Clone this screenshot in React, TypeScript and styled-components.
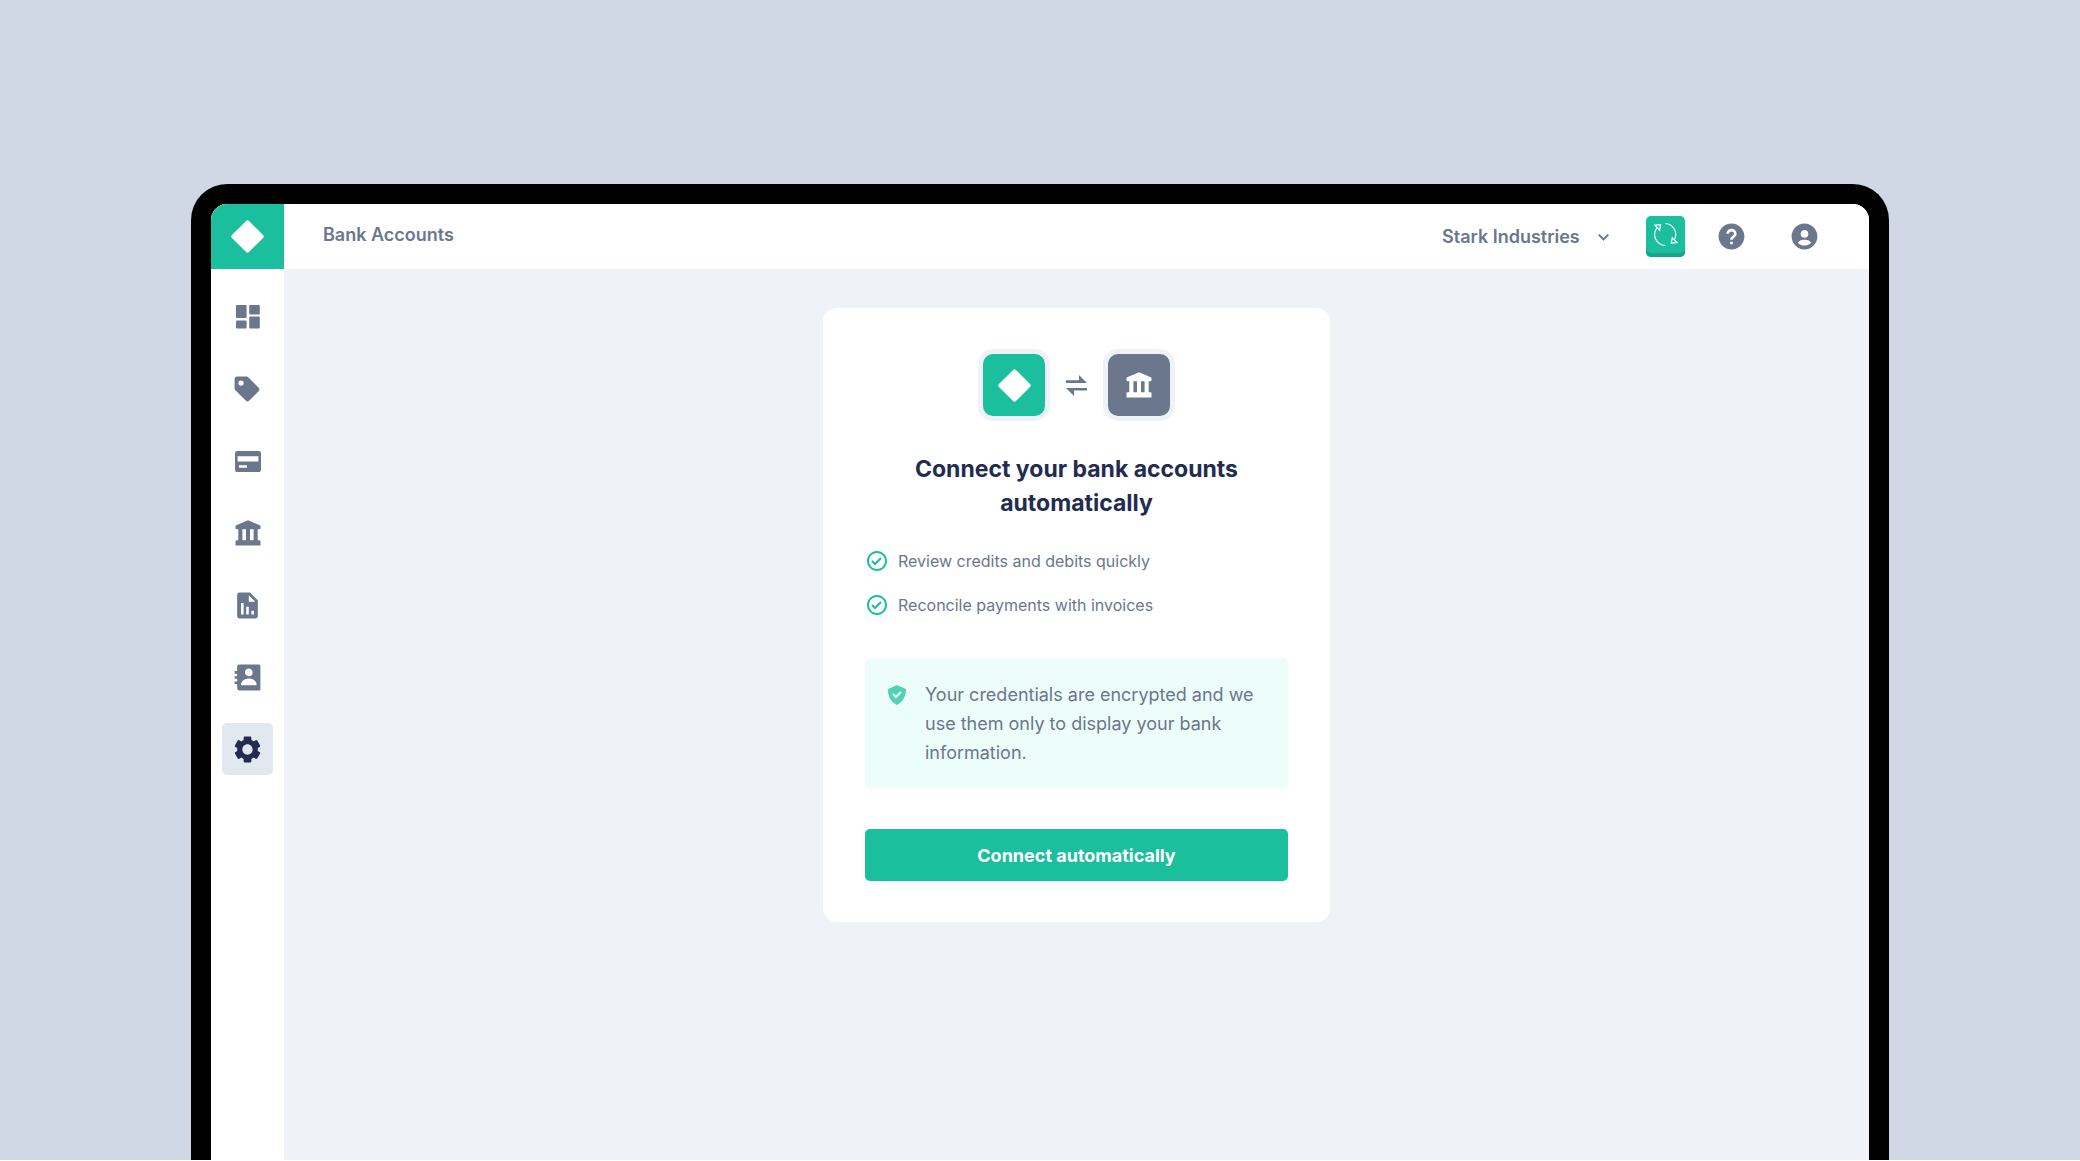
import React from "react";
import styled, { createGlobalStyle, css } from "styled-components";
import {
  BiCheckCircle,
  BiChevronDown,
  BiSolidCheckShield,
  BiSolidCog,
  BiSolidContact,
  BiSolidHelpCircle,
  BiSolidPurchaseTag,
  BiSolidReport,
  BiSolidUserCircle,
} from "react-icons/bi";

const color = {
  desk: "#d0d8e5",
  brand: "#1bbe9d",
  brandDark: "#17a488",
  slate: "#6b778d",
  navy: "#222b50",
  canvas: "#eff3f8",
  active: "#e1e8f0",
  mint: "#edfdfa",
};

const GlobalStyle = createGlobalStyle`
  *, *::before, *::after { box-sizing: border-box; }
  body { margin: 0; background: #fff; font-family: Inter, "Liberation Sans", sans-serif; color: ${color.slate}; }
  button, select { font-family: inherit; color: inherit; }
  h1, h2, p, ul { margin: 0; padding: 0; }
  svg { display: block; flex: none; }
`;

const Desk = styled.div`
  display: flex;
  height: calc(100vh - 1px);
  min-height: 940px;
  padding: 184px clamp(20px, 9.2vw, 191px) 0;
  background: ${color.desk};
  overflow: hidden;
`;

const Device = styled.div`
  flex: 1;
  display: flex;
  border: 20px solid #000;
  border-bottom: 0;
  border-radius: 36px 36px 0 0;
  background: #000;
`;

const Screen = styled.div`
  flex: 1;
  display: flex;
  border-radius: 16px 16px 0 0;
  overflow: hidden;
  background: ${color.canvas};
`;

const Sidebar = styled.aside`
  flex: none;
  width: 73px;
  display: flex;
  flex-direction: column;
  background: #fff;
`;

const Brand = styled.a`
  display: grid;
  place-items: center;
  height: 65px;
  background: ${color.brand};
`;

const Nav = styled.nav`
  display: flex;
  flex-direction: column;
  align-items: center;
  gap: 20px;
  padding-top: 22px;
`;

const NavLink = styled.a<{ $active?: boolean }>`
  display: grid;
  place-items: center;
  width: 51px;
  height: 52px;
  border-radius: 5px;
  color: ${color.slate};
  ${(p) =>
    p.$active &&
    css`
      background: ${color.active};
      color: ${color.navy};
    `}
`;

const Content = styled.div`
  flex: 1;
  display: flex;
  flex-direction: column;
`;

const Header = styled.header`
  display: flex;
  align-items: center;
  justify-content: space-between;
  height: 65px;
  padding: 0 49px 0 39px;
  background: #fff;
`;

const PageTitle = styled.h1`
  font-size: 18px;
  line-height: 28px;
  font-weight: 600;
  padding-bottom: 4px;
`;

const Actions = styled.div`
  display: flex;
  align-items: center;
`;

const Company = styled.label`
  display: flex;
  align-items: center;
  gap: 12px;
  margin-right: 31px;
`;

const CompanySelect = styled.select`
  appearance: none;
  border: 0;
  padding: 0;
  background: none;
  font-size: 18px;
  line-height: 28px;
  font-weight: 600;
`;

const SyncButton = styled.button`
  display: grid;
  place-items: center;
  width: 39px;
  height: 41px;
  margin-right: 31px;
  padding: 0 0 4px;
  border: 0;
  border-radius: 5px;
  background: ${color.brand};
  box-shadow: inset 0 -4px 0 ${color.brandDark};
`;

const RoundButton = styled.button`
  display: grid;
  place-items: center;
  padding: 0;
  border: 0;
  background: none;

  & + & {
    margin-left: 42px;
  }
`;

const Main = styled.main`
  flex: 1;
  display: flex;
  justify-content: center;
  align-items: flex-start;
  padding-top: 39px;
`;

const Card = styled.section`
  width: 507px;
  max-width: 100%;
  padding: 41px 42px;
  border-radius: 14px;
  background: #fff;
`;

const LinkRow = styled.div`
  display: flex;
  align-items: center;
  justify-content: center;
  gap: 16px;
`;

const Tile = styled.span<{ $tone: string }>`
  display: grid;
  place-items: center;
  width: 72px;
  height: 72px;
  border: 5px solid ${color.canvas};
  border-radius: 15px;
  background: ${(p) => p.$tone};
  color: #fff;
`;

const CardTitle = styled.h2`
  max-width: 360px;
  margin: 31px auto 0;
  font-size: 23px;
  line-height: 34px;
  font-weight: 700;
  text-align: center;
  color: ${color.navy};
`;

const Benefits = styled.ul`
  display: flex;
  flex-direction: column;
  gap: 20px;
  margin-top: 29px;
  list-style: none;
`;

const Benefit = styled.li`
  display: flex;
  align-items: center;
  gap: 9px;
  font-size: 16px;
  line-height: 24px;
`;

const Notice = styled.div`
  display: flex;
  align-items: flex-start;
  gap: 16px;
  margin-top: 41px;
  padding: 22px 20px 21px;
  border-radius: 5px;
  background: ${color.mint};
`;

const NoticeIcon = styled.span`
  padding-top: 3px;
  color: #51d3b8;
`;

const NoticeText = styled.p`
  font-size: 18px;
  line-height: 29px;
`;

const ConnectButton = styled.button`
  width: 100%;
  height: 52px;
  margin-top: 41px;
  padding: 0;
  border: 0;
  border-radius: 5px;
  background: ${color.brand};
  color: #fff;
  font-size: 18px;
  font-weight: 700;
`;

const Diamond = () => (
  <svg width="35" height="35" viewBox="0 0 35 35" aria-hidden="true">
    <rect x="5.500" y="5.500" width="24" height="24" rx="2" fill="#fff" transform="rotate(45 17.500 17.500)" />
  </svg>
);

const DashboardIcon = () => (
  <svg width="24" height="24" viewBox="0 0 24 24" fill="currentColor" aria-hidden="true">
    <rect x="0" y="0" width="10.600" height="13" rx="1" />
    <rect x="0" y="15.400" width="10.600" height="8.200" rx="1" />
    <rect x="13.200" y="0" width="10.600" height="9.600" rx="1" />
    <rect x="13.200" y="11.600" width="10.600" height="12" rx="1" />
  </svg>
);

const CardIcon = () => (
  <svg width="26" height="21" viewBox="0 0 26 21" fill="currentColor" aria-hidden="true">
    <path
      fillRule="evenodd"
      d="M2.600 0h20.800A2.600 2.600 0 0 1 26 2.600v15.800a2.600 2.600 0 0 1-2.600 2.600H2.600A2.600 2.600 0 0 1 0 18.400V2.600A2.600 2.600 0 0 1 2.600 0zM2.600 5.200v5.200h20.800V5.200zM4 14.200v2.600h8v-2.600z"
    />
  </svg>
);

const BankIcon = () => (
  <svg width="26" height="26" viewBox="0 0 26 26" fill="currentColor" aria-hidden="true">
    <path d="M13 0.300 24.800 5.300Q25.500 5.600 25.500 6.300V8Q25.500 9.200 24.300 9.200H22.700V20.200H24.500Q25.500 20.200 25.500 21.200V25.500H0.500V21.200Q0.500 20.200 1.500 20.200H3.300V9.200H1.700Q0.500 9.200 0.500 8V6.300Q0.500 5.600 1.200 5.300ZM7.400 9.200V20.200H11V9.200ZM15 9.200V20.200H18.600V9.200Z" />
  </svg>
);

const SwapIcon = () => (
  <svg width="21" height="21" viewBox="0 0 21 21" fill={color.slate} aria-hidden="true">
    <path d="M0 5.200h13V0l8 8H0zM21 15.600H8V21l-8-8h21z" />
  </svg>
);

const SyncIcon = () => (
  <svg width="25" height="25" viewBox="0 0 25 25" fill="none" stroke="#fff" strokeWidth="1.200" aria-hidden="true">
    <path d="M12.300 1.500A11 11 0 0 1 21.500 17.500" />
    <path d="M12.300 23.500A11 11 0 0 1 3.800 6" />
    <path d="M2 3.200 7.500 2.700 6.600 8.300z" />
    <path d="M19.300 15.800 24 20.600 18.300 21.200z" />
  </svg>
);

const navItems = [
  { label: "Dashboard", icon: <DashboardIcon /> },
  { label: "Products", icon: <BiSolidPurchaseTag size={31} /> },
  { label: "Payments", icon: <CardIcon /> },
  { label: "Banks", icon: <BankIcon /> },
  { label: "Reports", icon: <BiSolidReport size={31} /> },
  { label: "Contacts", icon: <BiSolidContact size={31} /> },
  { label: "Settings", icon: <BiSolidCog size={31} />, active: true },
];

const benefits = ["Review credits and debits quickly", "Reconcile payments with invoices"];

export default function App() {
  return (
    <>
      <GlobalStyle />
      <Desk>
        <Device>
          <Screen>
            <Sidebar>
              <Brand href="#home" aria-label="Home">
                <Diamond />
              </Brand>
              <Nav aria-label="Main">
                {navItems.map((item) => (
                  <NavLink
                    key={item.label}
                    href={"#" + item.label.toLowerCase()}
                    aria-label={item.label}
                    aria-current={item.active ? "page" : undefined}
                    $active={item.active}
                  >
                    {item.icon}
                  </NavLink>
                ))}
              </Nav>
            </Sidebar>
            <Content>
              <Header>
                <PageTitle>Bank Accounts</PageTitle>
                <Actions>
                  <Company>
                    <CompanySelect aria-label="Company">
                      <option>Stark Industries</option>
                    </CompanySelect>
                    <BiChevronDown size={23} />
                  </Company>
                  <SyncButton type="button" aria-label="Sync">
                    <SyncIcon />
                  </SyncButton>
                  <RoundButton type="button" aria-label="Help">
                    <BiSolidHelpCircle size={31} />
                  </RoundButton>
                  <RoundButton type="button" aria-label="Account">
                    <BiSolidUserCircle size={31} />
                  </RoundButton>
                </Actions>
              </Header>
              <Main>
                <Card>
                  <LinkRow>
                    <Tile $tone={color.brand}>
                      <Diamond />
                    </Tile>
                    <SwapIcon />
                    <Tile $tone={color.slate}>
                      <BankIcon />
                    </Tile>
                  </LinkRow>
                  <CardTitle>Connect your bank accounts automatically</CardTitle>
                  <Benefits>
                    {benefits.map((text) => (
                      <Benefit key={text}>
                        <BiCheckCircle size={24} color={color.brand} />
                        {text}
                      </Benefit>
                    ))}
                  </Benefits>
                  <Notice>
                    <NoticeIcon>
                      <BiSolidCheckShield size={24} />
                    </NoticeIcon>
                    <NoticeText>
                      Your credentials are encrypted and we use them only to display your bank information.
                    </NoticeText>
                  </Notice>
                  <ConnectButton type="button">Connect automatically</ConnectButton>
                </Card>
              </Main>
            </Content>
          </Screen>
        </Device>
      </Desk>
    </>
  );
}
